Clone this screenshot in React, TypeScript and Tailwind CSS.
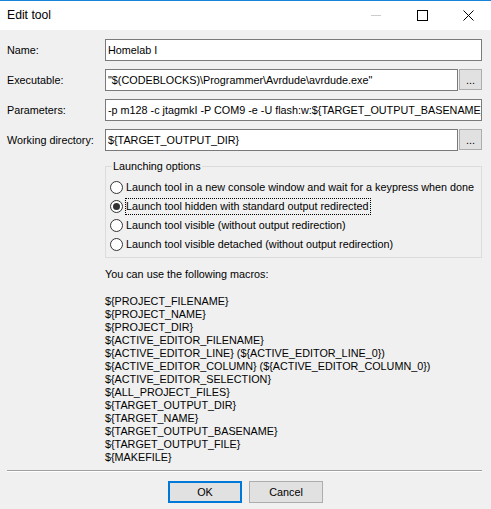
import React from "react";

const macros = [
  "${PROJECT_FILENAME}",
  "${PROJECT_NAME}",
  "${PROJECT_DIR}",
  "${ACTIVE_EDITOR_FILENAME}",
  "${ACTIVE_EDITOR_LINE} (${ACTIVE_EDITOR_LINE_0})",
  "${ACTIVE_EDITOR_COLUMN} (${ACTIVE_EDITOR_COLUMN_0})",
  "${ACTIVE_EDITOR_SELECTION}",
  "${ALL_PROJECT_FILES}",
  "${TARGET_OUTPUT_DIR}",
  "${TARGET_NAME}",
  "${TARGET_OUTPUT_BASENAME}",
  "${TARGET_OUTPUT_FILE}",
  "${MAKEFILE}",
];

const options = [
  "Launch tool in a new console window and wait for a keypress when done",
  "Launch tool hidden with standard output redirected",
  "Launch tool visible (without output redirection)",
  "Launch tool visible detached (without output redirection)",
];

function TextField({ value }: { value: string }) {
  return (
    <div className="flex-1 min-w-0 h-[22px] bg-white border border-[#7a7a7a] pl-[2px] flex items-center overflow-hidden whitespace-nowrap">
      {value}
    </div>
  );
}

function Browse() {
  return (
    <div className="ml-[1px] w-[23px] h-[21px] shrink-0 bg-[#e1e1e1] border border-[#adadad] flex items-end justify-center pb-[3px] leading-none">
      ...
    </div>
  );
}

function Radio({ label, checked }: { label: string; checked?: boolean }) {
  return (
    <div className="h-[19px] flex items-center">
      <div className="ml-[4px] w-[13px] h-[13px] rounded-full border border-[#333333] bg-white flex items-center justify-center shrink-0">
        {checked && <div className="w-[7px] h-[7px] rounded-full bg-[#333333]" />}
      </div>
      {checked ? (
        <span className="ml-[2px] border border-dotted border-black leading-[15px] pr-[1px]">{label}</span>
      ) : (
        <span className="ml-[3px] whitespace-nowrap">{label}</span>
      )}
    </div>
  );
}

export default function App() {
  return (
    <div className="w-[491px] h-[509px] bg-[#f0f0f0] border-t border-[#1883d7] overflow-hidden text-black text-[10.8px] font-['Liberation_Sans',Arial,sans-serif]">
      {/* title bar */}
      <div className="h-[29px] bg-white flex items-center">
        <span className="pl-[7px] text-[12.2px] flex-1">Edit tool</span>
        <div className="w-[46px] h-full flex items-center justify-center">
          <div className="w-[10px] h-px bg-[#cccccc]" />
        </div>
        <div className="w-[46px] h-full flex items-center justify-center">
          <div className="w-[11px] h-[11px] border border-black" />
        </div>
        <div className="w-[46px] h-full flex items-center justify-center">
          <svg width="11" height="11" viewBox="0 0 11 11">
            <path d="M0.5 0.5 L10.5 10.5 M10.5 0.5 L0.5 10.5" stroke="#000" strokeWidth="1" />
          </svg>
        </div>
      </div>

      <div className="pl-[7px] pr-[9px] pt-[9px] grid grid-cols-[98px_minmax(0,1fr)] gap-y-[8px] items-center">
        <span>Name:</span>
        <div className="flex min-w-0">
          <TextField value="Homelab I" />
        </div>

        <span>Executable:</span>
        <div className="flex items-start min-w-0">
          <TextField value={'"$(CODEBLOCKS)\\Programmer\\Avrdude\\avrdude.exe"'} />
          <Browse />
        </div>

        <span>Parameters:</span>
        <div className="flex min-w-0">
          <TextField value="-p m128 -c jtagmkI -P COM9 -e -U flash:w:${TARGET_OUTPUT_BASENAME}.hex" />
        </div>

        <span>Working directory:</span>
        <div className="flex items-start min-w-0">
          <TextField value="${TARGET_OUTPUT_DIR}" />
          <Browse />
        </div>
      </div>

      <div className="pl-[105px] pr-[9px]">
        <fieldset className="mt-[9px] border border-[#dcdcdc] pt-[5px] pb-[3px]">
          <legend className="ml-[6px] px-[1px] leading-[13px]">Launching options</legend>
          {options.map((o, i) => (
            <Radio key={o} label={o} checked={i === 1} />
          ))}
        </fieldset>

        <div className="mt-[10px] leading-[13px]">You can use the following macros:</div>
        <div className="mt-[14px] leading-[13px] whitespace-nowrap">
          {macros.map((m) => (
            <div key={m}>{m}</div>
          ))}
        </div>
      </div>

      <div className="mt-[6px] ml-[7px] mr-[9px] border-t border-[#a0a0a0] border-b border-b-white" />

      <div className="mt-[9px] flex justify-center gap-[7px]">
        <div className="w-[74px] h-[22px] bg-[#e1e1e1] border-2 border-[#0078d7] flex items-center justify-center">
          OK
        </div>
        <div className="w-[74px] h-[22px] bg-[#e1e1e1] border border-[#adadad] flex items-center justify-center">
          Cancel
        </div>
      </div>
    </div>
  );
}
